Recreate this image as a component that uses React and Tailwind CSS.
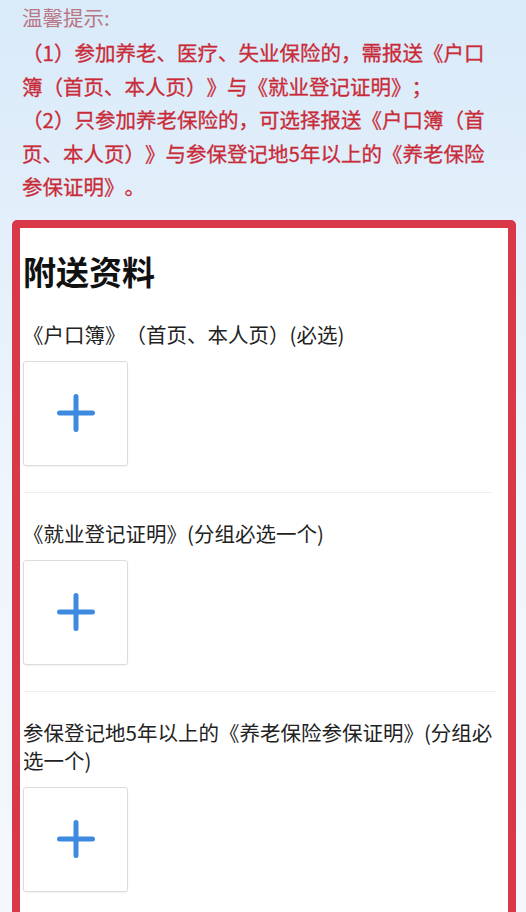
import React from "react";

const font = { fontFamily: '"Noto Sans CJK SC", "Noto Sans", sans-serif' };

const sections = [
  { label: "《户口簿》（首页、本人页）(必选)", divider: "mx-[10px]" },
  { label: "《就业登记证明》(分组必选一个)", divider: "mr-[5px]" },
  { label: "参保登记地5年以上的《养老保险参保证明》(分组必选一个)", divider: "" },
];

const PlusIcon = () => (
  <svg width="38" height="38" viewBox="0 0 38 38" fill="none">
    <path d="M19 2.5v33M2.5 19h33" stroke="#3d8ae0" strokeWidth="5" strokeLinecap="round" />
  </svg>
);

const UploadBox = () => (
  <div className="w-[105px] h-[105px] flex items-center justify-center bg-white border border-[#dcdcdc] rounded-[3px] shadow-[0_1px_2px_rgba(0,0,0,0.06)]">
    <PlusIcon />
  </div>
);

const App = () => {
  return (
    <div
      className="min-h-screen w-full bg-gradient-to-b from-[#d9eaf9] via-[#eef5fc] to-[#f5f8fc] overflow-hidden [text-spacing-trim:space-all]"
      style={font}
    >
      {/* Tips */}
      <div className="pl-[22px] pt-[1px] w-[492px]">
        <p className="text-[20.5px] leading-[33px] text-[#b97683]">温馨提示:</p>
        <p className="mt-[2px] text-[20.5px] leading-[33.5px] text-[#c92b38] [-webkit-text-stroke:0.3px_#c92b38]">
          （1）参加养老、医疗、失业保险的，需报送《户口簿（首页、本人页）》与《就业登记证明》；
          <br />
          （2）只参加养老保险的，可选择报送《户口簿（首页、本人页）》与参保登记地5年以上的《养老保险参保证明》。
        </p>
      </div>

      {/* Attachments */}
      <div className="mt-[16px] ml-[12px] mr-[10px] border-[8px] border-[#d93849] rounded-[5px] bg-white pl-[3px] pr-[12px] pt-[22px] pb-[40px]">
        <h2 className="text-[33px] leading-[42px] font-bold text-[#111]">附送资料</h2>
        {sections.map((s, i) => (
          <div key={i}>
            {i > 0 && <div className={`border-t border-[#efefef] ${s.divider}`} />}
            <div className={i === 0 ? "pt-[28px] pb-[26px]" : "pt-[26px] pb-[26px]"}>
              <p className="text-[20.5px] leading-[28px] text-[#222]">{s.label}</p>
              <div className="mt-[13px]">
                <UploadBox />
              </div>
            </div>
          </div>
        ))}
      </div>
    </div>
  );
};

export default App;
